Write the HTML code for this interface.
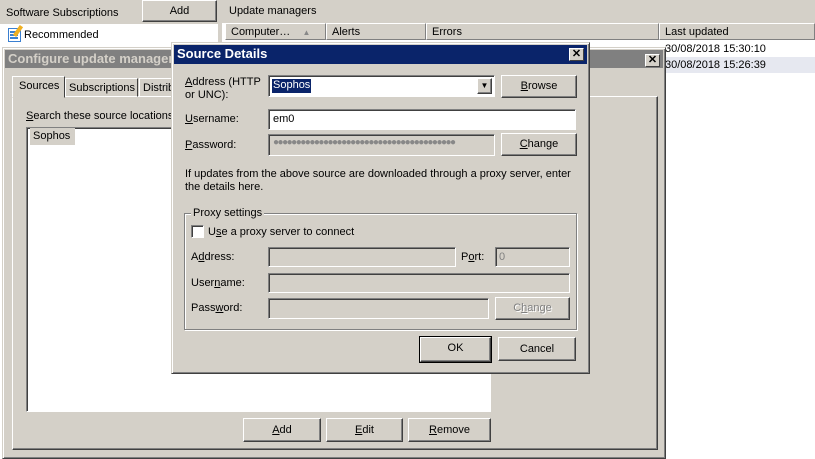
<!DOCTYPE html>
<html><head><style>
*{box-sizing:border-box;margin:0;padding:0}
body{width:815px;height:457px;overflow:hidden;background:#fff;font-family:"Liberation Sans",sans-serif;font-size:11px;color:#000;position:relative}
.a{position:absolute}
.btn{position:absolute;background:#d4d0c8;border:1px solid;border-color:#fff #404040 #404040 #fff;box-shadow:inset -1px -1px 0 #808080;text-align:center}
.fld{position:absolute;background:#fff;border:1px solid;border-color:#808080 #fff #fff #808080;box-shadow:inset 1px 1px 0 #404040}
.dis{background:#d4d0c8}
.win{position:absolute;background:#d4d0c8;border:1px solid;border-color:#d4d0c8 #404040 #404040 #d4d0c8;box-shadow:inset 1px 1px 0 #fff,inset -1px -1px 0 #808080}
.x{position:absolute;width:15px;height:13px;background:#d4d0c8;border:1px solid;border-color:#fff #404040 #404040 #fff;font-size:11px;font-weight:bold;line-height:11px;text-align:center}
u{text-decoration:underline}
.hd{position:absolute;top:23px;height:17px;background:#d4d0c8;border:1px solid;border-color:#fff #808080 #808080 #fff;padding:2px 0 0 5px}
</style></head><body>
<div class="a" style="left:0;top:0;width:220px;height:24px;background:#d4d0c8"></div>
<div class="a" style="left:6px;top:7px">Software Subscriptions</div>
<div class="btn" style="left:142px;top:0;width:75px;height:22px;line-height:20px">Add</div>
<div class="a" style="left:218px;top:0;width:4px;height:457px;background:#d4d0c8"></div>
<div class="a" style="left:8px;top:28px;width:13px;height:14px;background:#fff;border:1px solid #3a7fd0"></div>
<div class="a" style="left:10px;top:31px;width:8px;height:2px;background:#3a7fd0;box-shadow:0 3px 0 #3a7fd0,0 6px 0 #3a7fd0"></div>
<div class="a" style="left:16px;top:25px;width:4px;height:12px;background:#f0b020;transform:rotate(35deg)"></div>
<div class="a" style="left:24px;top:29px">Recommended</div>
<div class="a" style="left:222px;top:0;width:593px;height:23px;background:#d4d0c8"></div>
<div class="a" style="left:229px;top:5px">Update managers</div>
<div class="hd" style="left:225px;width:101px">Computer… &nbsp;&nbsp;&nbsp;<span style="color:#888;font-size:8px">▲</span></div>
<div class="hd" style="left:326px;width:100px">Alerts</div>
<div class="hd" style="left:426px;width:233px">Errors</div>
<div class="hd" style="left:659px;width:156px">Last updated</div>
<div class="a" style="left:666px;top:57px;width:149px;height:16px;background:#e6e8f0"></div>
<div class="a" style="left:665px;top:43px">30/08/2018 15:30:10</div>
<div class="a" style="left:665px;top:59px">30/08/2018 15:26:39</div>
<div class="win" style="left:2px;top:47px;width:664px;height:412px"></div>
<div class="a" style="left:5px;top:50px;width:658px;height:18px;background:#808080"></div>
<div class="a" style="left:8px;top:51px;color:#d4d0c8;font-weight:bold;font-size:13px">Configure update manager - S</div>
<div class="x" style="left:645px;top:54px">✕</div>
<div class="a" style="left:12px;top:96px;width:646px;height:354px;border:1px solid;border-color:#fff #404040 #404040 #fff;box-shadow:inset -1px -1px 0 #808080"></div>
<div class="a" style="left:65px;top:78px;width:73px;height:19px;border:1px solid;border-color:#fff #404040 transparent #fff;padding:3px 0 0 3px">Subscriptions</div>
<div class="a" style="left:139px;top:78px;width:40px;height:19px;border:1px solid;border-color:#fff transparent transparent #fff;padding:3px 0 0 3px">Distrib</div>
<div class="a" style="left:12px;top:76px;width:53px;height:22px;background:#d4d0c8;border:1px solid;border-color:#fff #404040 transparent #fff;padding:3px 0 0 6px">Sources</div>
<div class="a" style="left:26px;top:110px"><u>S</u>earch these source locations</div>
<div class="fld" style="left:26px;top:127px;width:465px;height:285px"></div>
<div class="a" style="left:30px;top:128px;width:45px;height:17px;background:#d4d0c8;padding:2px 0 0 3px">Sophos</div>
<div class="btn" style="left:243px;top:418px;width:78px;height:24px;line-height:22px"><u>A</u>dd</div>
<div class="btn" style="left:326px;top:418px;width:77px;height:24px;line-height:22px"><u>E</u>dit</div>
<div class="btn" style="left:408px;top:418px;width:83px;height:24px;line-height:22px"><u>R</u>emove</div>
<div class="win" style="left:171px;top:42px;width:419px;height:332px"></div>
<div class="a" style="left:174px;top:45px;width:413px;height:19px;background:#0a246a"></div>
<div class="a" style="left:177px;top:46px;color:#fff;font-weight:bold;font-size:13px">Source Details</div>
<div class="x" style="left:569px;top:48px">✕</div>
<div class="a" style="left:185px;top:76px;line-height:13px"><u>A</u>ddress (HTTP<br>or UNC):</div>
<div class="fld" style="left:268px;top:75px;width:227px;height:22px"></div>
<div class="a" style="left:272px;top:79px;background:#0a246a;color:#fff;padding:0 1px;height:14px">Sophos</div>
<div class="btn" style="left:477px;top:78px;width:15px;height:16px;font-size:8px;line-height:14px">▼</div>
<div class="btn" style="left:501px;top:75px;width:76px;height:23px;line-height:21px"><u>B</u>rowse</div>
<div class="a" style="left:185px;top:113px"><u>U</u>sername:</div>
<div class="fld" style="left:268px;top:109px;width:308px;height:21px"></div>
<div class="a" style="left:273px;top:113px">em0</div>
<div class="a" style="left:185px;top:139px"><u>P</u>assword:</div>
<div class="fld dis" style="left:268px;top:134px;width:227px;height:22px"></div>
<div class="a" style="left:273px;top:137px;color:#888;font-size:10px;letter-spacing:-1.5px;white-space:nowrap;overflow:hidden;width:219px">●●●●●●●●●●●●●●●●●●●●●●●●●●●●●●●●●●●●●●●●</div>
<div class="btn" style="left:501px;top:133px;width:76px;height:23px;line-height:21px"><u>C</u>hange</div>
<div class="a" style="left:185px;top:168px;line-height:13px">If updates from the above source are downloaded through a proxy server, enter<br>the details here.</div>
<div class="a" style="left:184px;top:213px;width:393px;height:117px;border:1px solid #808080;box-shadow:1px 1px 0 #fff,inset 1px 1px 0 #fff"></div>
<div class="a" style="left:191px;top:207px;background:#d4d0c8;padding:0 2px">Proxy settings</div>
<div class="fld" style="left:191px;top:225px;width:13px;height:13px"></div>
<div class="a" style="left:208px;top:226px">U<u>s</u>e a proxy server to connect</div>
<div class="a" style="left:191px;top:251px">A<u>d</u>dress:</div>
<div class="fld dis" style="left:268px;top:247px;width:188px;height:20px"></div>
<div class="a" style="left:461px;top:251px">P<u>o</u>rt:</div>
<div class="fld dis" style="left:495px;top:247px;width:75px;height:20px"></div>
<div class="a" style="left:499px;top:251px;color:#808080">0</div>
<div class="a" style="left:191px;top:277px">User<u>n</u>ame:</div>
<div class="fld dis" style="left:268px;top:273px;width:302px;height:20px"></div>
<div class="a" style="left:191px;top:302px">Pass<u>w</u>ord:</div>
<div class="fld dis" style="left:268px;top:298px;width:221px;height:21px"></div>
<div class="btn" style="left:495px;top:297px;width:75px;height:23px;line-height:21px;color:#808080;text-shadow:1px 1px 0 #fff">C<u>h</u>ange</div>
<div class="btn" style="left:420px;top:337px;width:71px;height:25px;line-height:21px;outline:1px solid #000">OK</div>
<div class="btn" style="left:498px;top:337px;width:78px;height:24px;line-height:22px">Cancel</div>
</body></html>
